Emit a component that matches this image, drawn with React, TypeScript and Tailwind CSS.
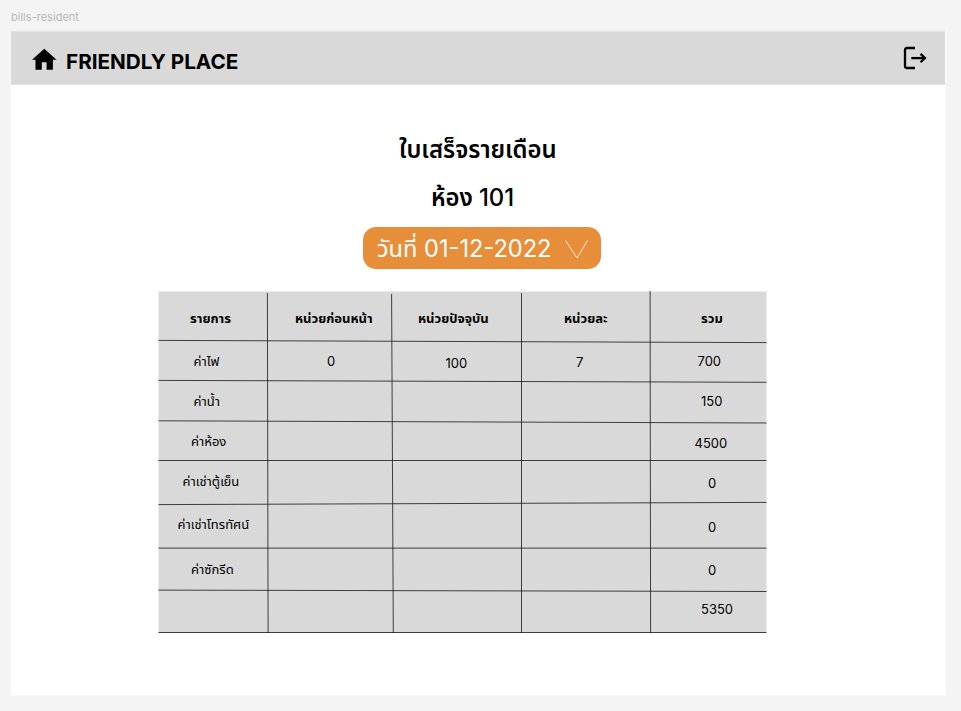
type Cell = { text: string; place: string };

const headings: Cell[] = [
  { text: 'รายการ', place: 'pl-[32px] pt-[16px]' },
  { text: 'หน่วยก่อนหน้า', place: 'pl-[28px] pt-[16px]' },
  { text: 'หน่วยปัจจุบัน', place: 'pl-[26px] pt-[16px]' },
  { text: 'หน่วยละ', place: 'pl-[43px] pt-[16px]' },
  { text: 'รวม', place: 'pl-[51px] pt-[16px]' },
];

const blank: Cell = { text: '', place: '' };

const rows: Cell[][] = [
  [
    { text: 'ค่าไฟ', place: 'pl-[35.5px] pt-[10px]' },
    { text: '0', place: 'pl-[60px] pt-[10px]' },
    { text: '100', place: 'pl-[53.5px] pt-[12px]' },
    { text: '7', place: 'pl-[55px] pt-[11px]' },
    { text: '700', place: 'pl-[47.5px] pt-[10px]' },
  ],
  [{ text: 'ค่าน้ำ', place: 'pl-[35.5px] pt-[10px]' }, blank, blank, blank, { text: '150', place: 'pl-[51px] pt-[10px]' }],
  [{ text: 'ค่าห้อง', place: 'pl-[33px] pt-[9px]' }, blank, blank, blank, { text: '4500', place: 'pl-[44.5px] pt-[11px]' }],
  [{ text: 'ค่าเช่าตู้เย็น', place: 'pl-[24.5px] pt-[10px]' }, blank, blank, blank, { text: '0', place: 'pl-[58px] pt-[12px]' }],
  [{ text: 'ค่าเช่าโทรทัศน์', place: 'pl-[19.5px] pt-[10px]' }, blank, blank, blank, { text: '0', place: 'pl-[58px] pt-[13px]' }],
  [{ text: 'ค่าซักรีด', place: 'pl-[33px] pt-[11px]' }, blank, blank, blank, { text: '0', place: 'pl-[58px] pt-[12px]' }],
  [blank, blank, blank, blank, { text: '5350', place: 'pl-[51px] pt-[9px]' }],
];

// Slightly slanted rules, in table coordinates.
const rules = [
  [0, 48.4, 608, 50.6],
  [0, 88.4, 608, 90.3],
  [0, 128.8, 608, 131],
  [0, 168.5, 608, 168.5],
  [0, 212.6, 608, 210.4],
  [0, 256.1, 608, 256.1],
  [0, 298.1, 608, 299.5],
  [0, 340.5, 608, 340.5],
  [108.9, 1, 109.6, 341],
  [233.1, 2, 234.8, 341],
  [363, 1, 363, 341],
  [491.6, -1, 492.1, 341],
];

function TableCell({ cell, bold }: { cell: Cell; bold?: boolean }) {
  return (
    <div className={`${cell.place} whitespace-nowrap text-[13px] leading-[20px] ${bold ? 'font-bold' : ''}`}>{cell.text}</div>
  );
}

export default function App() {
  return (
    <div className="h-[711px] w-[961px] overflow-hidden bg-[#f4f4f4] pl-[11px] font-['Inter','Noto_Sans_Thai','Noto_Sans',sans-serif] text-black">
      <div className="h-[31px] pt-[9px] text-[11px] leading-[16px] tracking-[0.02px] text-[#b8b8b8]">bills-resident</div>
      <main className="h-[665px] w-[935px] border-b border-r border-[#f9f9f9] bg-white">
        <header className="flex h-[54px] items-start border-y border-[#e4e4e4] bg-[#d9d9d9] pl-[20px] pr-[17px]">
          <svg className="mt-[16px] h-[22px] w-[26px]" viewBox="0 0 26 22">
            <path d="M13.3 0.7 1 11.7H4.5V21.8H10.8V14.2H15.6V21.8H21.9V11.7H25.5Z" />
          </svg>
          <h1 className="ml-[9px] mt-[16px] whitespace-nowrap text-[20.7px] font-bold leading-[28px]">FRIENDLY PLACE</h1>
          <svg className="ml-auto mt-[14px] h-[24px] w-[25px]" viewBox="0 0 25 24" fill="none" stroke="#000" strokeWidth="2.3">
            <path d="M12 2H4Q2 2 2 4V20Q2 22 4 22H12" />
            <path d="M8.3 12.1H22" />
            <path d="M17.6 7.9 21.9 12.1 17.6 16.3" />
          </svg>
        </header>
        <div className="flex flex-col">
          <h2 className="ml-[388px] mt-[47px] whitespace-nowrap text-[23.9px] font-semibold leading-[36px]">ใบเสร็จรายเดือน</h2>
          <h2 className="ml-[420px] mt-[12px] whitespace-nowrap text-[23.9px] font-semibold leading-[36px]">
            ห้อง <span className="font-medium">101</span>
          </h2>
          <button className="ml-[352px] mt-[11px] flex h-[42px] w-[238px] items-center rounded-[13px] bg-[#e78e3b] pl-[14px] pt-px text-white">
            <span className="w-[187.5px] whitespace-nowrap text-left text-[23.6px] leading-[36px]">วันที่ 01-12-2022</span>
            <svg className="h-[20px] w-[24px]" viewBox="0 0 24 20" fill="none" stroke="white" strokeWidth="0.8">
              <path d="M0.5 1.5 12 19 22.5 1.5" />
            </svg>
          </button>
        </div>
        <section className="relative ml-[147px] mt-[22px] h-[342px] w-[609px] border-l border-r border-t border-[#ececec] bg-[#d9d9d9]">
          <div className="-ml-px grid grid-cols-[109px_125px_129px_129px_116px] grid-rows-[49px_40px_41px_39px_43px_44px_42px_43px]">
            {headings.map((cell) => (
              <TableCell key={cell.text} cell={cell} bold />
            ))}
            {rows.flatMap((row, r) => row.map((cell, c) => <TableCell key={`${r}-${c}`} cell={cell} />))}
          </div>
          <svg className="absolute left-0 top-0 h-[342px] w-[608px] overflow-visible" viewBox="0.5 0.5 608 342" stroke="#000" strokeOpacity="0.8" strokeWidth="0.9">
            {rules.map(([x1, y1, x2, y2], i) => (
              <line key={i} x1={x1} y1={y1 + 0.5} x2={x2} y2={y2 + 0.5} />
            ))}
          </svg>
        </section>
      </main>
    </div>
  );
}
